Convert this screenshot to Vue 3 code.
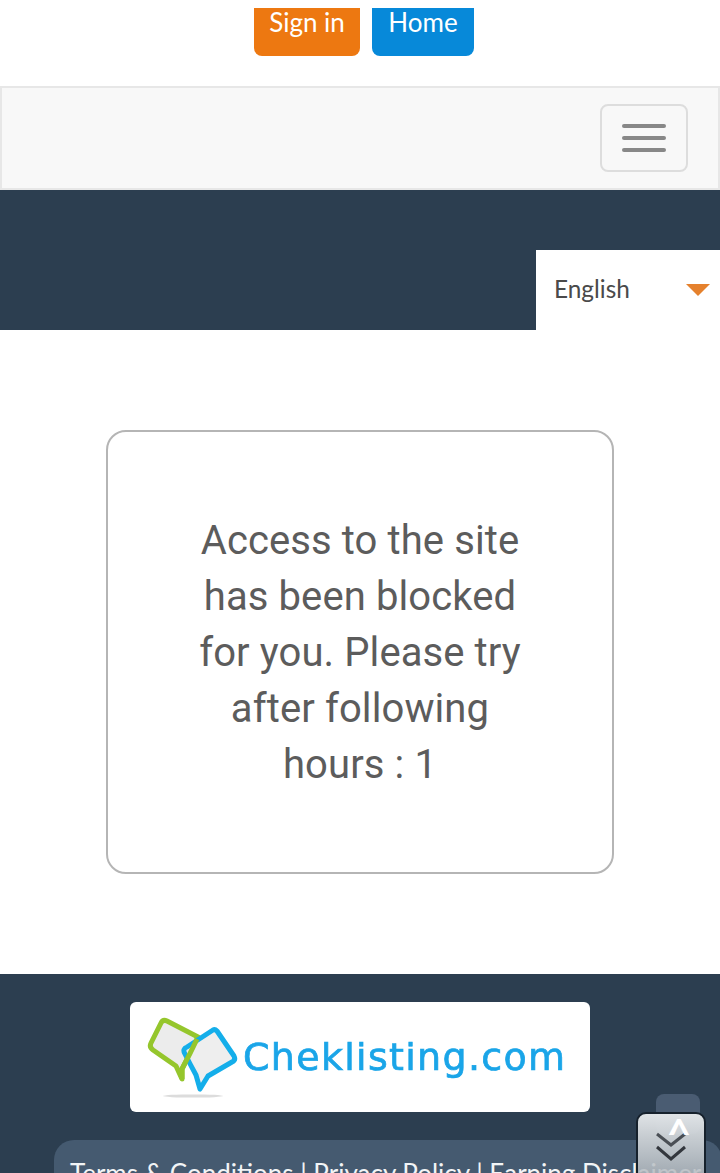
<script setup>
const footerLinks = 'Terms & Conditions | Privacy Policy | Earning Disclaimer'
const message = 'Access to the site has been blocked for you. Please try after following hours : 1'
</script>

<template>
  <div class="page">
    <div class="top-btns">
      <a class="btn orange">Sign in</a>
      <a class="btn blue">Home</a>
    </div>

    <nav class="navbar">
      <button class="toggle">
        <span class="bar"></span>
        <span class="bar"></span>
        <span class="bar"></span>
      </button>
    </nav>

    <div class="band">
      <div class="lang">
        <span class="lang-name">English</span>
        <i class="arrow"></i>
      </div>
    </div>

    <main class="content">
      <div class="notice">{{ message }}</div>
    </main>

    <footer class="footer">
      <div class="logo">
        <svg class="logo-mark" width="110" height="110" viewBox="0 0 110 110">
          <ellipse cx="63" cy="94" rx="30" ry="1.6" fill="#dcdcdc" />
          <path d="M37 19 L68 35 Q60 52 52 67 L52 77 L46 64 L23 48 Q19 45 21 41 L31 21 Q33 17 37 19 Z" fill="#ececec" stroke="#95c62c" stroke-width="5" stroke-linejoin="round" />
          <path d="M87 29 L104 54 Q106 58 102 60 L78 74 L70 87 L66 73 Q60 62 55 52 Q52 47 57 45 L83 28 Q85 27 87 29 Z" fill="#ececec" fill-opacity=".9" stroke="#14aeea" stroke-width="5" stroke-linejoin="round" />
          <path d="M67 37 Q60 52 52 67 L52 77" fill="none" stroke="#95c62c" stroke-width="5" />
        </svg>
        <span class="logo-text">Cheklisting.com</span>
      </div>
      <div class="links">{{ footerLinks }}</div>
    </footer>

    <div class="to-top"></div>
    <div class="scroll-btn">
      <svg width="36" height="34" viewBox="0 0 36 34">
        <path d="M4 4 L18 15 L32 4" fill="none" stroke="#4a4f55" stroke-width="3" />
        <path d="M4 17 L18 29 L32 17" fill="none" stroke="#33373d" stroke-width="3" />
      </svg>
    </div>
    <span class="caret">^</span>
  </div>
</template>

<style scoped>
.page {
  position: relative;
  height: 1173px;
  overflow: hidden;
  background: #fff;
  font-family: "Lato", "Liberation Sans", sans-serif;
}
.top-btns {
  display: flex;
  justify-content: center;
  gap: 12px;
  height: 86px;
  padding: 8px 0 0 8px;
  box-sizing: border-box;
}
.btn {
  height: 48px;
  color: #fff;
  font-size: 26px;
  line-height: 28px;
  text-align: center;
  border-radius: 0 0 8px 8px;
}
.orange {
  width: 106px;
  background: #ed7811;
}
.blue {
  width: 102px;
  background: #0789d9;
}
.navbar {
  display: flex;
  justify-content: flex-end;
  height: 104px;
  padding: 16px 30px 0 0;
  box-sizing: border-box;
  background: #f8f8f8;
  border: 2px solid #e7e7e7;
}
.toggle {
  display: flex;
  flex-direction: column;
  align-items: center;
  justify-content: center;
  gap: 8px;
  width: 88px;
  height: 68px;
  padding: 0;
  background: transparent;
  border: 2px solid #ddd;
  border-radius: 8px;
}
.bar {
  width: 44px;
  height: 4px;
  background: #888;
  border-radius: 2px;
}
.band {
  display: flex;
  justify-content: flex-end;
  align-items: flex-end;
  height: 140px;
  background: #2c3e50;
}
.lang {
  display: flex;
  align-items: center;
  justify-content: space-between;
  width: 184px;
  height: 80px;
  padding: 0 10px 0 18px;
  box-sizing: border-box;
  background: #fff;
  color: #4a4a4a;
  font-size: 24.4px;
}
.lang-name {
  position: relative;
  top: -2px;
}
.arrow {
  width: 0;
  height: 0;
  border-left: 12px solid transparent;
  border-right: 12px solid transparent;
  border-top: 12px solid #e5812d;
}
.content {
  display: flex;
  justify-content: center;
  padding: 100px 0;
}
.notice {
  width: 508px;
  height: 444px;
  padding: 81px 80px 0;
  box-sizing: border-box;
  border: 2px solid #b5b5b5;
  border-radius: 20px;
  color: #5c5c5c;
  font-family: "Roboto", sans-serif;
  font-size: 40px;
  letter-spacing: 0.1px;
  line-height: 56px;
  text-align: center;
}
.footer {
  height: 199px;
  padding-top: 28px;
  box-sizing: border-box;
  background: #2c3e50;
}
.logo {
  display: flex;
  align-items: center;
  width: 460px;
  height: 110px;
  margin: 0 auto;
  background: #fff;
  border-radius: 6px;
  overflow: hidden;
}
.logo-mark {
  flex: none;
  margin-right: 3px;
  filter: blur(0.5px);
}
.logo-text {
  color: #1aa5e8;
  font-family: "DejaVu Sans", sans-serif;
  font-size: 38px;
  letter-spacing: 1.3px;
  -webkit-text-stroke: 0.7px #1aa5e8;
  white-space: nowrap;
  filter: blur(0.5px);
}
.links {
  width: 668px;
  height: 60px;
  margin: 28px 0 0 54px;
  padding: 17px 16px 0;
  box-sizing: border-box;
  background: #455a70;
  border-radius: 20px;
  color: #f2f4f6;
  font-size: 26px;
  line-height: 32px;
  white-space: nowrap;
  overflow: hidden;
}
.to-top {
  position: absolute;
  left: 656px;
  top: 1094px;
  width: 44px;
  height: 40px;
  background: #4a5c72;
  border-radius: 8px;
}
.scroll-btn {
  position: absolute;
  left: 636px;
  top: 1112px;
  width: 70px;
  height: 80px;
  box-sizing: border-box;
  padding: 16px 0 0 15px;
  background: linear-gradient(#dfe3e6, rgba(165, 172, 178, .8));
  border: 2px solid #16212c;
  border-radius: 10px;
}
.caret {
  position: absolute;
  left: 656px;
  top: 1108px;
  width: 46px;
  color: #fff;
  font-size: 42px;
  font-weight: 700;
  line-height: 50px;
  text-align: center;
}
</style>
